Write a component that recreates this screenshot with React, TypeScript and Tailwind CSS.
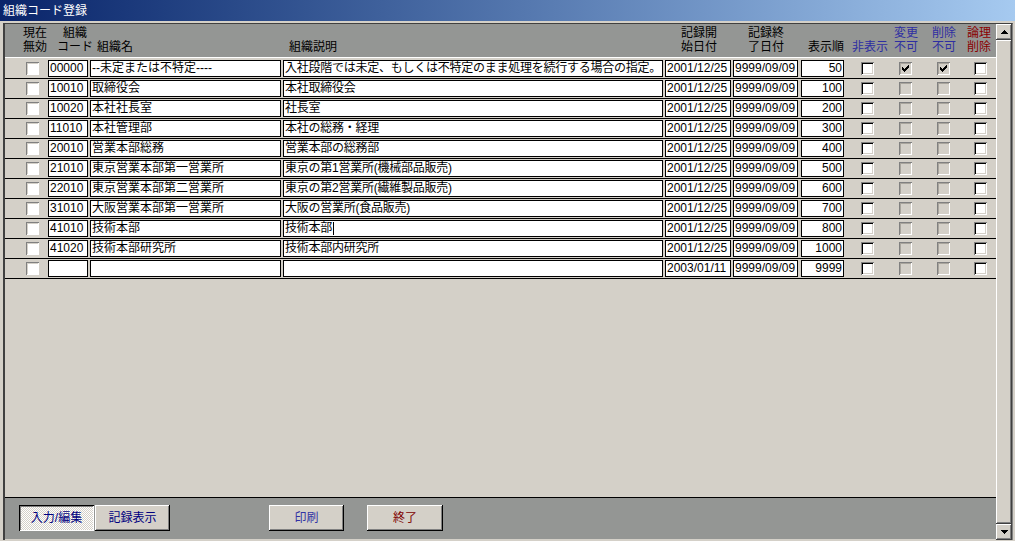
import React from "react";

type Row = {
  code: string;
  name: string;
  desc: string;
  start: string;
  end: string;
  order: string;
  locked?: boolean;
  caret?: boolean;
};

const rows: Row[] = [
  {
    code: "00000",
    name: "--未定または不特定----",
    desc: "入社段階では未定、もしくは不特定のまま処理を続行する場合の指定。",
    start: "2001/12/25",
    end: "9999/09/09",
    order: "50",
    locked: true,
  },
  { code: "10010", name: "取締役会", desc: "本社取締役会", start: "2001/12/25", end: "9999/09/09", order: "100" },
  { code: "10020", name: "本社社長室", desc: "社長室", start: "2001/12/25", end: "9999/09/09", order: "200" },
  { code: "11010", name: "本社管理部", desc: "本社の総務・経理", start: "2001/12/25", end: "9999/09/09", order: "300" },
  { code: "20010", name: "営業本部総務", desc: "営業本部の総務部", start: "2001/12/25", end: "9999/09/09", order: "400" },
  { code: "21010", name: "東京営業本部第一営業所", desc: "東京の第1営業所(機械部品販売)", start: "2001/12/25", end: "9999/09/09", order: "500" },
  { code: "22010", name: "東京営業本部第二営業所", desc: "東京の第2営業所(繊維製品販売)", start: "2001/12/25", end: "9999/09/09", order: "600" },
  { code: "31010", name: "大阪営業本部第一営業所", desc: "大阪の営業所(食品販売)", start: "2001/12/25", end: "9999/09/09", order: "700" },
  { code: "41010", name: "技術本部", desc: "技術本部", start: "2001/12/25", end: "9999/09/09", order: "800", caret: true },
  { code: "41020", name: "技術本部研究所", desc: "技術本部内研究所", start: "2001/12/25", end: "9999/09/09", order: "1000" },
  { code: "", name: "", desc: "", start: "2003/01/11", end: "9999/09/09", order: "9999" },
];

const raised =
  "bg-[#d4d0c8] shadow-[inset_-1px_-1px_0_#404040,inset_1px_1px_0_#ffffff,inset_-2px_-2px_0_#808080]";
const buttonRaised =
  "bg-[#d4d0c8] shadow-[inset_-1px_-1px_0_#000000,inset_1px_1px_0_#ffffff,inset_-2px_-2px_0_#808080]";
const inputClassName =
  "flex h-[17px] items-center overflow-hidden whitespace-nowrap border border-black bg-white px-[1px] leading-[15px] text-black";

function CheckMark() {
  return (
    <svg width="7" height="7" viewBox="0 0 7 7" shapeRendering="crispEdges" aria-hidden="true">
      <path
        fill="#000"
        d="M6 0h1v3H6v1H5v1H4v1H3v1H2V6H1V5H0V2h1v1h1v1h1V3h1V2h1V1h1z"
      />
    </svg>
  );
}

function CheckBox({
  kind,
  checked = false,
}: {
  kind: "plain" | "enabled" | "disabled";
  checked?: boolean;
}) {
  const style =
    kind === "enabled"
      ? "bg-white shadow-[inset_1px_1px_0_#808080,inset_-1px_-1px_0_#ffffff,inset_2px_2px_0_#000000,inset_-2px_-2px_0_#d4d0c8]"
      : kind === "plain"
        ? "bg-white shadow-[inset_1px_1px_0_#808080,inset_-1px_-1px_0_#ffffff,inset_2px_2px_0_#d4d0c8]"
        : "bg-[#d4d0c8] shadow-[inset_1px_1px_0_#808080,inset_-1px_-1px_0_#ffffff,inset_2px_2px_0_#a9a59d]";

  return (
    <div className={`flex h-[13px] w-[13px] shrink-0 items-center justify-center ${style}`}>
      {checked ? <CheckMark /> : null}
    </div>
  );
}

function Arrow({ up }: { up: boolean }) {
  return (
    <svg width="7" height="4" viewBox="0 0 7 4" shapeRendering="crispEdges" aria-hidden="true">
      <path fill="#000" d={up ? "M3 0h1v1h1v1h1v1h1v1H0V3h1V2h1V1h1z" : "M0 0h7v1H6v1H5v1H4v1H3V3H2V2H1V1H0z"} />
    </svg>
  );
}

function Header() {
  return (
    <div className="flex h-[34px] shrink-0 items-end border-b border-white bg-[#949694] pb-[3px] text-[12px] leading-[14px] text-black">
      <div className="ml-[18px] w-[24px] text-center">
        現在
        <br />
        無効
      </div>
      <div className="ml-[10px] w-[36px] whitespace-nowrap text-center">
        組織
        <br />
        コード
      </div>
      <div className="ml-[4px] w-[36px] whitespace-nowrap">組織名</div>
      <div className="ml-[156px] w-[48px] whitespace-nowrap">組織説明</div>
      <div className="ml-[343px] w-[38px] whitespace-nowrap text-center">
        記録開
        <br />
        始日付
      </div>
      <div className="ml-[29px] w-[38px] whitespace-nowrap text-center">
        記録終
        <br />
        了日付
      </div>
      <div className="ml-[23px] w-[36px] whitespace-nowrap">表示順</div>
      <div className="ml-[8px] w-[36px] whitespace-nowrap text-[#2e2ea2]">非表示</div>
      <div className="ml-[6px] w-[24px] text-center text-[#2e2ea2]">
        変更
        <br />
        不可
      </div>
      <div className="ml-[14px] w-[24px] text-center text-[#2e2ea2]">
        削除
        <br />
        不可
      </div>
      <div className="ml-[11px] w-[24px] text-center text-[#8a0000]">
        論理
        <br />
        削除
      </div>
    </div>
  );
}

function DataRow({ row }: { row: Row }) {
  return (
    <div className="flex h-[20px] shrink-0 items-center border-b border-black text-[12px]">
      <div className="ml-[21px]">
        <CheckBox kind="plain" />
      </div>
      <div className={`${inputClassName} ml-[9px] w-[40px]`}>{row.code}</div>
      <div className={`${inputClassName} ml-[2px] w-[191px]`}>{row.name}</div>
      <div className={`${inputClassName} ml-[2px] w-[380px] tracking-[-0.25px]`}>
        {row.desc}
        {row.caret ? <span className="ml-[1px] h-[13px] w-[1px] shrink-0 bg-black" /> : null}
      </div>
      <div className={`${inputClassName} ml-[2px] w-[66px]`}>{row.start}</div>
      <div className={`${inputClassName} ml-[2px] w-[65px]`}>{row.end}</div>
      <div className={`${inputClassName} ml-[3px] w-[43px] justify-end`}>{row.order}</div>
      <div className="ml-[17px]">
        <CheckBox kind="enabled" />
      </div>
      <div className="ml-[25px]">
        <CheckBox kind="disabled" checked={row.locked} />
      </div>
      <div className="ml-[25px]">
        <CheckBox kind="disabled" checked={row.locked} />
      </div>
      <div className="ml-[24px]">
        <CheckBox kind="enabled" />
      </div>
    </div>
  );
}

function Footer() {
  return (
    <div className="flex h-[42px] shrink-0 items-start border-t border-black bg-[#949694] pt-[7px] text-[12px]">
      <button
        type="button"
        className="ml-[14px] flex h-[26px] w-[75px] items-center justify-center bg-[repeating-conic-gradient(#ffffff_0_25%,#d4d0c8_0_50%)] bg-[length:2px_2px] text-[#000080] shadow-[inset_1px_1px_0_#000000,inset_-1px_-1px_0_#ffffff,inset_2px_2px_0_#808080]"
      >
        入力/編集
      </button>
      <button
        type="button"
        className={`ml-[1px] flex h-[26px] w-[75px] items-center justify-center text-[#000080] ${buttonRaised}`}
      >
        記録表示
      </button>
      <button
        type="button"
        className={`ml-[99px] flex h-[26px] w-[75px] items-center justify-center text-[#3232a4] ${buttonRaised}`}
      >
        印刷
      </button>
      <button
        type="button"
        className={`ml-[23px] flex h-[26px] w-[76px] items-center justify-center text-[#800000] ${buttonRaised}`}
      >
        終了
      </button>
    </div>
  );
}

export default function App() {
  return (
    <div className="flex h-[541px] w-[1015px] flex-col overflow-hidden bg-[#d4d0c8] font-['Liberation_Sans','Noto_Sans_CJK_JP',sans-serif] text-[12px]">
      <div className="flex h-[21px] shrink-0 items-center bg-linear-to-r from-[#0a246a] to-[#a6caf0] pl-[3px] text-[12px] text-white">
        組織コード登録
      </div>
      <div className="flex min-h-0 flex-1 pl-[3px] pr-[2px] pt-[2px] pb-[1px]">
        <div className="flex min-w-0 flex-1 border-t border-l border-r border-t-[#404040] border-l-[#404040] border-r-[#808080]">
          <div className="flex min-w-0 flex-1 flex-col border-l border-[#404040]">
            <Header />
            <div className="flex shrink-0 flex-col pt-[1px]">
              {rows.map((row, index) => (
                <DataRow key={index} row={row} />
              ))}
            </div>
            <div className="flex-1" />
            <Footer />
            <div className="h-[1px] shrink-0" />
          </div>
          <div className="flex w-[16px] shrink-0 flex-col">
            <div className={`flex h-[16px] shrink-0 items-center justify-center ${raised}`}>
              <Arrow up />
            </div>
            <div className={`flex-1 ${raised}`} />
            <div className={`flex h-[16px] shrink-0 items-center justify-center ${raised}`}>
              <Arrow up={false} />
            </div>
          </div>
        </div>
      </div>
    </div>
  );
}
